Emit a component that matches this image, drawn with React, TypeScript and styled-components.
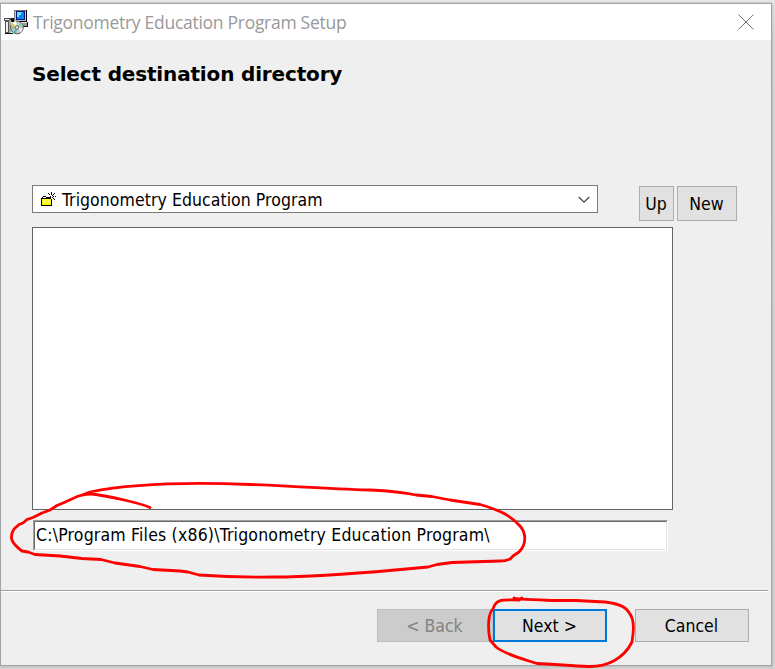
import React from "react";
import styled, { createGlobalStyle } from "styled-components";

const GlobalStyle = createGlobalStyle`
  * { box-sizing: border-box; }
  html, body { margin: 0; padding: 0; }
  body {
    width: 775px;
    height: 669px;
    overflow: hidden;
    background: #e9e9e9;
    font-family: "DejaVu Sans Condensed", "DejaVu Sans", sans-serif;
    font-stretch: condensed;
  }
`;

const Desktop = styled.div`
  position: relative;
  width: 775px;
  height: 669px;
  padding-top: 3px;
  overflow: hidden;
  background: linear-gradient(#ececec, #e4e4e4 3px, #d8d8d8 40px, #d2d2d2);
`;

const Window = styled.main`
  display: flex;
  flex-direction: column;
  width: 772px;
  height: 663px;
  border: 1px solid #a3a3a3;
  background: #efefef;
  box-shadow: 0 0 3px #aaa;
`;

const TitleBar = styled.header`
  display: flex;
  align-items: center;
  flex: 0 0 36px;
  padding: 0 17px 0 3px;
  background: #fff;
`;

const Label = styled.span<{ $spacing?: number; $words?: number; $lift?: number }>`
  font-size: 17.5px;
  letter-spacing: ${(p) => p.$spacing ?? 0}px;
  word-spacing: ${(p) => p.$words ?? 0}px;
  line-height: 24px;
  white-space: pre;
  padding-bottom: ${(p) => p.$lift ?? 0}px;
`;

const Caption = styled(Label)`
  flex: 1;
  margin-left: 4px;
  color: #999;
  font-family: "Open Sans", sans-serif;
  font-stretch: normal;
`;

const Heading = styled.h1`
  margin: 21px 0 0 31px;
  height: 26px;
  font: bold 20px/26px "DejaVu Sans", sans-serif;
  font-stretch: normal;
  letter-spacing: -0.16px;
  color: #000;
`;

const Chooser = styled.div`
  display: flex;
  align-items: flex-start;
  margin: 98px 0 0 31px;
  height: 42px;
`;

const Combo = styled.div`
  display: flex;
  align-items: center;
  width: 566px;
  height: 28px;
  margin-right: 41px;
  padding: 1px 7px 0 8px;
  border: 1px solid #7a7a7a;
  background: #fff;

  ${Label} { flex: 1; margin-left: 5px; }
`;

const Button = styled.button<{ $width: number; $height: number; $default?: boolean }>`
  display: flex;
  align-items: center;
  justify-content: center;
  width: ${(p) => p.$width}px;
  height: ${(p) => p.$height}px;
  padding: 0 1px 0 0;
  border: ${(p) => (p.$default ? "2px solid #0078d7" : "1px solid #adadad")};
  border-radius: 0;
  background: #e1e1e1;
  color: #000;
  font-family: inherit;
  font-stretch: inherit;

  &:disabled { background: #ccc; border-color: #bfbfbf; color: #838383; }
`;

const SmallButtons = styled.div`
  display: flex;
  gap: 3px;
  margin-top: 1px;
`;

const DirectoryList = styled.div`
  width: 641px;
  height: 283px;
  margin-left: 31px;
  border: 1px solid #646464;
  background: #fff;
`;

const PathField = styled.div`
  width: 635px;
  height: 31px;
  margin: 10px 0 0 32px;
  border: 1px solid;
  border-color: #a0a0a0 #fff #fff #a0a0a0;
`;

const PathInner = styled.div`
  display: flex;
  align-items: center;
  height: 29px;
  padding-left: 1px;
  border: 1px solid;
  border-color: #696969 #e3e3e3 #e3e3e3 #696969;
  background: #fff;
`;

const Divider = styled.div`
  width: 767px;
  height: 2px;
  margin-top: 39px;
  border-top: 1px solid #a0a0a0;
  border-bottom: 1px solid #fff;
`;

const Footer = styled.footer`
  display: flex;
  margin: 17px 0 0 376px;

  button:last-child { margin-left: 28px; }
`;

const Ink = styled.svg`
  position: absolute;
  inset: 0;
  pointer-events: none;
`;

const InstallerIcon = () => (
  <svg width="25" height="25" viewBox="0 0 25 25" shapeRendering="crispEdges">
    <path d="M0 8h7v3H6v13H1V11H0z" fill="#555" />
    <path d="M1 9h4v1H1zM2 12h2v10H2z" fill="#eee" />
    <path d="M5 10h2v13H5z" fill="#aaa" />
    <path d="M7 8h3v4H7z" fill="#111" />
    <path d="M10 0h12v11H10z" fill="#c8c8c8" />
    <path d="M10 0h12v1H11v10h-1z" fill="#777" />
    <path d="M22 0h1v12h-9v-1h8z" fill="#000" />
    <path d="M12 1h9v9h-9z" fill="#00137c" />
    <path d="M13 2h7v7h-7z" fill="#0789ed" />
    <path d="M13 2h5v1h-1v2h-2v2h-2z" fill="#66e5ff" />
    <path d="M16 12h8v5h-7z" fill="#999" />
    <path d="M17 12h6v1h-6z" fill="#eee" />
    <path d="M23 12h1v5h-5v-1h4z" fill="#111" />
    <g shapeRendering="auto">
      <circle cx="13" cy="17.5" r="6.3" fill="#c5c9c8" stroke="#555" />
      <path d="M13 17.5 8 13l4-2z" fill="#fff" />
      <path d="m13 17.5-6-2v-2l1-1z" fill="#dcca58" />
      <path d="m13 17.5 4-5 2 3z" fill="#75dba9" />
      <path d="m13 17.5 6 1-2 4z" fill="#eee" />
      <path d="m13 17.5-1 6-3-1z" fill="#35bbc4" />
      <path d="m13 17.5-6 2v-3z" fill="#8fbb80" />
      <circle cx="13" cy="17.5" r="1.7" fill="#fff" stroke="#555" />
    </g>
    <path d="M1 23h8v1H1z" fill="#111" />
  </svg>
);

const FolderIcon = () => (
  <svg width="16" height="16" viewBox="0 0 16 16" shapeRendering="crispEdges">
    <path d="M1 6h9v8H1z" fill="#ffff10" />
    <path d="M2 7h1v1H2zM6 7h1v1H6zM3 9h1v1H3zM7 9h1v1H7zM2 11h1v1H2zM6 11h1v1H6z" fill="#fff" />
    <path d="M0 6h1v8H0zM1 13h10v1H1zM10 7h1v7h-1zM1 5h1v1H1zM2 4h3v1H2zM5 5h5v1H5zM1 6h9v1H1z" fill="#000" />
    <path d="M10 0h1v3h-1zM7 1h1v1H7zM8 2h1v1H8zM9 4h1v1H9zM13 1h1v1h-1zM12 2h1v1h-1zM11 3h1v1h-1zM12 4h1v1h-1zM14 4h1v1h-1zM12 6h1v1h-1zM13 7h1v1h-1zM11 5h1v1h-1z" fill="#000" />
  </svg>
);

export default function App() {
  return (
    <>
      <GlobalStyle />
      <Desktop>
        <Window>
          <TitleBar>
            <InstallerIcon />
            <Caption $spacing={-0.28}>Trigonometry Education Program Setup</Caption>
            <svg width="16" height="16" viewBox="0 0 16 16">
              <path d="M.5.5l15 15m0-15-15 15" stroke="#777" fill="none" />
            </svg>
          </TitleBar>
          <Heading>Select destination directory</Heading>
          <Chooser>
            <Combo>
              <FolderIcon />
              <Label $spacing={0.06}>Trigonometry Education Program</Label>
              <svg width="12" height="8" viewBox="0 0 12 8">
                <path d="m.8 1 5.2 5.2L11.2 1" stroke="#444" strokeWidth="1.2" fill="none" />
              </svg>
            </Combo>
            <SmallButtons>
              <Button $width={35} $height={35}><Label>Up</Label></Button>
              <Button $width={60} $height={35}><Label>New</Label></Button>
            </SmallButtons>
          </Chooser>
          <DirectoryList />
          <PathField>
            <PathInner>
              <Label $spacing={0.19} $lift={2}>
                {"C:\\Program Files (x86)\\Trigonometry Education Program\\"}
              </Label>
            </PathInner>
          </PathField>
          <Divider />
          <Footer>
            <Button $width={116} $height={33} disabled><Label>{"< Back"}</Label></Button>
            <Button $width={114} $height={33} $default><Label>{"Next >"}</Label></Button>
            <Button $width={114} $height={33}><Label>Cancel</Label></Button>
          </Footer>
        </Window>
        <Ink width="775" height="669" viewBox="0 0 775 669" fill="none" stroke="#f00" strokeWidth="2.8" strokeLinecap="round" strokeLinejoin="round">
          <path d="M150 507.500C140 503 112 497 96 494.500C87 493.500 80 495 74 498L63 503L57 505.500L50 510L42 513L33 517.500L27 519.500L23 523L19 524.500L14 529C9 537 11 543 22 551L28 552L35 554.500L60 556L82 558.500L101 559.500L115 563L140 566.500L153 569.500L180 571L188 572L199 575C220 576.500 245 577.500 275 577C310 577 350 574 395 570L428 567L437 564.500L452 562.500L500 561C508 561 511 559.500 513 556L519 552C526 545 527 534 520 526C511 515 497 509 480 504.500L450 500L432 496.500L416 495C402 492 390 491 370 490C320 488.500 285 485.500 250 484.500C200 482.500 135 483 90 492L82 495" />
          <path d="M514 598C519 600 526 598.500 552 600.500L576 600.500L605 602C622 604 628 608 632 618C635 626 633 633 632 642C624 658 608 667 588 666.500C571 666 554 664 537 663.500C523 659 506 655 496 647L490 640C487 625 489 612 493 609C496 598 504 600 519 600L522 598" />
        </Ink>
      </Desktop>
    </>
  );
}
